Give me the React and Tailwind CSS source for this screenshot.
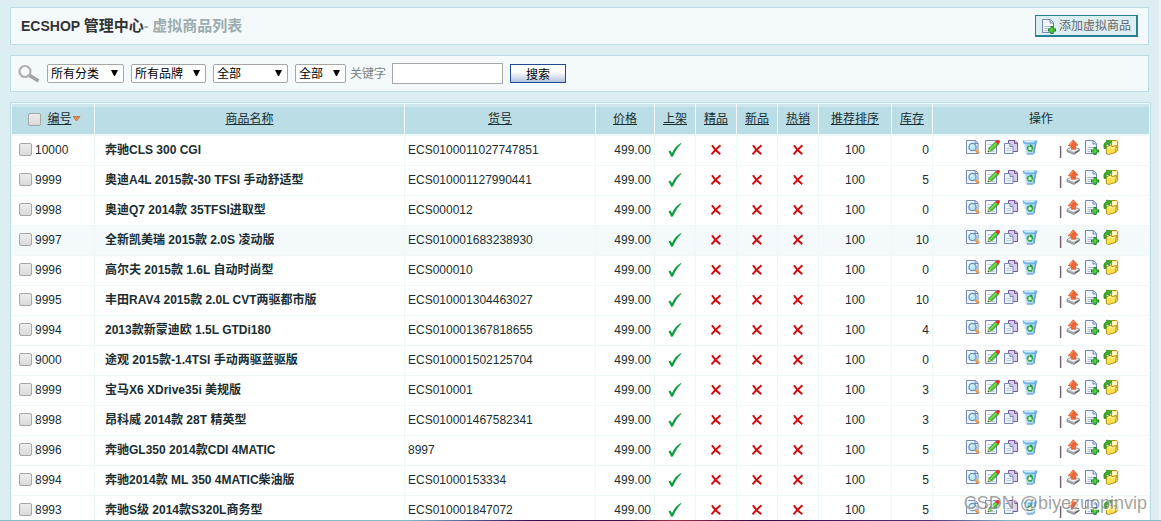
import React from "react";

const ROWS = [
  ["10000", "奔驰CLS 300 CGI", "ECS0100011027747851", "0"],
  ["9999", "奥迪A4L 2015款-30 TFSI 手动舒适型", "ECS010001127990441", "5"],
  ["9998", "奥迪Q7 2014款 35TFSI进取型", "ECS000012", "0"],
  ["9997", "全新凯美瑞 2015款 2.0S 凌动版", "ECS010001683238930", "10"],
  ["9996", "高尔夫 2015款 1.6L 自动时尚型", "ECS000010", "0"],
  ["9995", "丰田RAV4 2015款 2.0L CVT两驱都市版", "ECS010001304463027", "10"],
  ["9994", "2013款新蒙迪欧 1.5L GTDi180", "ECS010001367818655", "4"],
  ["9000", "途观 2015款-1.4TSI 手动两驱蓝驱版", "ECS010001502125704", "0"],
  ["8999", "宝马X6 XDrive35i 美规版", "ECS010001", "3"],
  ["8998", "昂科威 2014款 28T 精英型", "ECS010001467582341", "3"],
  ["8996", "奔驰GL350 2014款CDI 4MATIC", "8997", "5"],
  ["8994", "奔驰2014款 ML 350 4MATIC柴油版", "ECS01000153334", "5"],
  ["8993", "奔驰S级 2014款S320L商务型", "ECS010001847072", "5"],
];

const Svg = ({ children }) => (
  <svg width="16" height="16" viewBox="0 0 16 16" className="block shrink-0" aria-hidden="true">
    {children}
  </svg>
);

const ViewIcon = () => (
  <Svg>
    <path d="M1.500 1.500h9l2.500 2.500v10.500h-11.500z" fill="#f3f7fd" stroke="#7486b4" />
    <path d="M10 1.500v3h3" fill="#cfdcf0" stroke="#7486b4" />
    <circle cx="7.500" cy="8" r="3.600" fill="#bfe6f5" stroke="#5f93bb" strokeWidth="1.300" />
    <path d="M5.700 8a1.900 1.900 0 0 1 1.900-1.900" stroke="#fff" fill="none" />
    <path d="M10.500 10.800l3.500 3.500" stroke="#e98b3c" strokeWidth="2.600" />
    <path d="M10.600 10.200l3 3" stroke="#f9c98e" strokeWidth="0.800" />
  </Svg>
);

const EditIcon = () => (
  <Svg>
    <path d="M1.500 1.500h11v13h-11z" fill="#f3f7fd" stroke="#7486b4" />
    <path d="M3.500 5.500h5M3.500 8.500h4M8 12.500h3" stroke="#b9c9e6" />
    <path d="M4 12.900l1-3.600 7-7 2.700 2.700-7 7z" fill="#4cc22f" stroke="#2b8a1e" strokeWidth="0.700" />
    <path d="M6.300 10.200l6.600-6.600" stroke="#a8ee80" />
    <path d="M11.300 3l1.800-2h2.200l.5.500v2.200l-1.800 1.900z" fill="#e2382c" />
    <path d="M3.900 13l.9-3 2 2z" fill="#f2d29a" />
    <path d="M3.700 13.200l.4-1.500 1.100 1.100z" fill="#333" />
  </Svg>
);

const CopyIcon = () => (
  <Svg>
    <path d="M5.500 1.500h6.500l2.500 2.500v8.500h-9z" fill="#d9cdea" stroke="#74589a" />
    <path d="M11.500 1.500v3h3" fill="#b9a6d3" stroke="#74589a" />
    <path d="M1.500 4.500h5.500l3 3v7h-8.500z" fill="#eef3fc" stroke="#7486b4" />
    <path d="M7 4.500v3h3" fill="#cfdcf0" stroke="#7486b4" />
    <path d="M3.500 9.500h4.500M3.500 11.500h4.500" stroke="#b9c9e6" />
  </Svg>
);

const TrashIcon = () => (
  <Svg>
    <path d="M1.700 3.500l2 10.800 1.300 1.200h6l1.300-1.200 2-10.800z" fill="#b4daf5" />
    <path d="M2.300 4l1.900 10.300" stroke="#deF0fb" strokeWidth="1.300" />
    <path d="M13.700 4l-1.900 10.500" stroke="#5d9ddb" strokeWidth="1.500" />
    <path d="M.5 1.500h15l-.8 3c-4 1.400-9.400 1.400-13.400 0z" fill="#6db1ea" />
    <path d="M1.500 1.500h12l-2 2h-8.500z" fill="#d4ebfa" />
    <path d="M5 15h6" stroke="#5d8fc4" />
    <circle cx="8" cy="9.500" r="2.500" fill="#e6f8e2" stroke="#2aa53c" strokeWidth="1.700" />
    <path d="M8 6v1.800M5 11.400l1.400-.8M11 11.400l-1.400-.8" stroke="#c9ecd0" strokeWidth="0.800" />
    <path d="M8 5.600l2.600 1-1.900 1.800z" fill="#148a2c" />
  </Svg>
);

const UploadIcon = () => (
  <Svg>
    <path d="M2 10.500l5-3 7.500 2.500v1.800l-5.500 3.700-7-3z" fill="#a9adb2" stroke="#6f7276" strokeWidth="0.700" />
    <path d="M2.500 10.500l4.800-2.500 6.500 2.200-4.900 2.900z" fill="#eceef0" />
    <path d="M10 14l3.600-2.400" stroke="#4f5257" />
    <path d="M8.200 .8l4.800 5.400-2.300.1v4h-4.300l-.2-3.300-3-.2z" fill="#f26432" stroke="#d8501f" strokeWidth="0.600" />
    <path d="M8.100 2.300l-3 3.700" stroke="#ffb48a" fill="none" strokeWidth="0.800" />
  </Svg>
);

const AddIcon = () => (
  <Svg>
    <path d="M1.500 1.500h8l3 3v10h-11z" fill="#f3f7fd" stroke="#7486b4" />
    <path d="M9 1.500v3.500h3.500" fill="#cfdcf0" stroke="#7486b4" />
    <path d="M3.500 8.500h6M3.500 10.500h4M3.500 12.500h3" stroke="#a9bbdd" />
    <path d="M9.500 8h3v2.500h2.500v3h-2.500v2.500h-3v-2.500h-2.500v-3h2.500z" fill="#128a1b" />
    <path d="M11 9.200v5.600M8.200 12h5.600" stroke="#6fe64c" strokeWidth="1.200" />
  </Svg>
);

const FolderIcon = () => (
  <Svg>
    <path d="M8.500 1.500h5l1.200 1v9l-1.500 1.500h-4.700z" fill="#fff0a3" stroke="#b38f12" />
    <path d="M10 3h3v7.500h-3z" fill="#fffbe0" />
    <path d="M3 8l4.500-2 1.500 1.500 4.500-1-1 7-7 2-2-1z" fill="#ffe14f" stroke="#b38f12" />
    <path d="M5 9l2.500-1.300 1.500 1.500 3-.7" stroke="#fff6b8" fill="none" />
    <path d="M1.200 9.500c-1-4 .3-6.200 2.600-6.700l-.5-1.600 5.200.6-2.300 4.600-1-1.500c-2 .5-2.500 2-1.900 4.300z" fill="#3fae2a" stroke="#1f7d16" strokeWidth="0.700" />
  </Svg>
);

const Tick = () => (
  <svg width="14" height="14" viewBox="0 0 14 14" className="mx-auto block" role="img" aria-label="是">
    <path d="M.5 8.500l1.800-1.100 1.700 2.800c2-4.400 4.600-7.600 9-10.100l.5.400c-3.600 3.500-6.300 7.700-8.600 13l-1.800.2c-.7-2-1.500-3.600-2.600-5.200z" fill="#089c3c" />
  </svg>
);

const Cross = () => (
  <svg width="12" height="12" viewBox="0 0 12 12" className="mx-auto block" role="img" aria-label="否">
    <path d="M2 1.300c1.500 2.800 4.500 6.300 8.300 8.800M10.500 1.300c-3 2.500-6 5.500-9 9" stroke="#d20a10" strokeWidth="1.900" fill="none" />
  </svg>
);

const checkboxClass =
  "size-[13px] shrink-0 appearance-none rounded-[2px] border border-[#a6a6a6] bg-linear-to-b from-[#ededed] to-[#dadada] checked:bg-none checked:bg-[#278296]";

function Select({ label, className, options }) {
  return (
    <div className={`grid h-[19px] items-center ${className}`}>
      <select
        aria-label={label}
        className="col-start-1 row-start-1 h-[19px] w-full appearance-none rounded-[2px] border border-[#a6a6a6] bg-white pl-[3px] text-black"
      >
        {options.map((o) => (
          <option key={o}>{o}</option>
        ))}
      </select>
      <svg
        width="7"
        height="8"
        viewBox="0 0 7 8"
        aria-hidden="true"
        className="pointer-events-none col-start-1 row-start-1 mr-[6px] justify-self-end"
      >
        <path d="M0 0h7L4 6H3z" />
      </svg>
    </div>
  );
}

const HEADINGS = ["商品名称", "货号", "价格", "上架", "精品", "新品", "热销", "推荐排序", "库存"];

const thClass =
  "h-[31px] border-b border-[#eef8f9] bg-[#bbdde5] bg-[linear-gradient(#cbe5eb_0_3px,#bbdde5_3px)] p-0 text-center font-normal";

const ACTIONS = [
  ["查看", ViewIcon],
  ["编辑", EditIcon],
  ["复制", CopyIcon],
  ["回收站", TrashIcon],
];
const CARD_ACTIONS = [
  ["批量添加", UploadIcon],
  ["补货", AddIcon],
  ["查看虚拟卡", FolderIcon],
];

const IconLink = ({ label, Icon }) => (
  <a href="#" aria-label={label} title={label}>
    <Icon />
  </a>
);

export default function App() {
  return (
    <div className="relative flex h-screen flex-col overflow-hidden bg-[#ddeef2] font-['Liberation_Sans','Noto_Sans_CJK_SC',sans-serif] text-[12px] leading-4 text-[#192e32]">
      <div className="flex min-h-0 flex-1 flex-col gap-[10px] overflow-hidden border-r-2 border-[#f0f2f4] pt-[7px] pr-2 pl-[10px]">
        <header className="mr-[2px] flex h-[38px] shrink-0 items-center justify-between border border-[#bbdde5] bg-[#f4fafb] pr-[10px] pl-[10px]">
          <h1 className="text-[15px] leading-5 font-bold text-[#9cacaf]">
            <a href="#" className="text-[#333333]">
              <span className="text-[14px]">ECSHOP </span>管理中心
            </a>
            <span className="text-[14px]">- </span>虚拟商品列表
          </h1>
          <a
            href="#"
            className="flex h-[22px] items-center gap-[2px] border-t border-r-2 border-b-2 border-l border-[#278296] bg-[#ddeef2] px-[5px] text-[#666666]"
          >
            <AddIcon />
            添加虚拟商品
          </a>
        </header>

        <form
          onSubmit={(e) => e.preventDefault()}
          className="mr-[2px] flex h-[37px] shrink-0 items-center gap-[7px] border border-[#bbdde5] bg-[#f4fafb] px-[7px]"
        >
          <svg width="22" height="20" viewBox="0 0 22 20" className="shrink-0" aria-hidden="true">
            <path d="M11 11l9.500 6" stroke="#a3a3a3" strokeWidth="3.600" />
            <circle cx="7" cy="7.500" r="5.500" fill="#f8fbfc" stroke="#b0b0b0" strokeWidth="2.200" />
          </svg>
          <Select label="分类" className="w-[77px]" options={["所有分类"]} />
          <Select label="品牌" className="w-[75px]" options={["所有品牌"]} />
          <Select label="推荐" className="w-[75px]" options={["全部", "精品", "新品", "热销"]} />
          <div className="flex items-center gap-1">
            <Select label="上架状态" className="w-[51px]" options={["全部", "上架", "下架"]} />
            <label htmlFor="keyword" className="text-[#808080]">
              关键字
            </label>
            <input id="keyword" type="text" className="ml-[2px] h-[21px] w-[111px] border border-[#a6a6a6] bg-white px-1" />
          </div>
          <button
            type="submit"
            className="h-[19px] w-14 border border-[#1f4a8c] bg-linear-to-b from-white from-40% to-[#b4c3dc] pt-[2px] text-[12px] leading-4 text-black"
          >
            搜索
          </button>
        </form>

        <div className="shrink-0 border border-[#bbdde5]">
          <table className="w-full table-fixed border-separate border-spacing-px bg-[#eef8f9]">
            <colgroup>
              <col className="w-[82px]" />
              <col />
              <col className="w-[190px]" />
              <col className="w-[58px]" />
              <col className="w-10" />
              <col className="w-10" />
              <col className="w-10" />
              <col className="w-10" />
              <col className="w-[72px]" />
              <col className="w-10" />
              <col className="w-[216px]" />
            </colgroup>
            <thead>
              <tr>
                <th className={thClass}>
                  <div className="flex items-center justify-center pl-[3px]">
                    <input type="checkbox" aria-label="全选" className={checkboxClass} />
                    <a href="#" className="ml-[6px] underline">
                      编号
                    </a>
                    <svg width="9" height="8" viewBox="0 0 9 8" aria-hidden="true">
                      <path d="M1 1.500h7L4.500 6z" fill="#f08a3c" stroke="#a8705c" strokeWidth="0.800" />
                    </svg>
                  </div>
                </th>
                {HEADINGS.map((h) => (
                  <th key={h} className={thClass}>
                    <a href="#" className="underline">
                      {h}
                    </a>
                  </th>
                ))}
                <th className={thClass}>操作</th>
              </tr>
            </thead>
            <tbody>
              {ROWS.map(([id, name, sn, stock], i) => (
                <tr key={id} className={i === 3 ? "h-[29px] bg-[#f4fafb]" : "h-[29px] bg-white"}>
                  <td className="p-0 pb-[2px] pl-[7px]">
                    <label className="flex items-center gap-[3px]">
                      <input type="checkbox" className={checkboxClass} />
                      {id}
                    </label>
                  </td>
                  <td className="p-0 pb-[2px] pl-[10px] font-bold whitespace-nowrap">{name}</td>
                  <td className="p-0 pb-[2px] pl-[3px]">{sn}</td>
                  <td className="p-0 pr-[3px] pb-[2px] text-right">499.00</td>
                  <td className="p-0 pb-[2px]">
                    <Tick />
                  </td>
                  <td className="p-0 pb-[2px]">
                    <Cross />
                  </td>
                  <td className="p-0 pb-[2px]">
                    <Cross />
                  </td>
                  <td className="p-0 pb-[2px]">
                    <Cross />
                  </td>
                  <td className="p-0 pb-[2px] text-center">100</td>
                  <td className="p-0 pr-[3px] pb-[2px] text-right">{stock}</td>
                  <td className="p-0">
                    <div className="flex h-[29px] items-start justify-center gap-[3px] pt-[3px] pl-[2px]">
                      {ACTIONS.map(([label, Icon]) => (
                        <IconLink key={label} label={label} Icon={Icon} />
                      ))}
                      <span className="ml-[18px] pt-1">|</span>
                      {CARD_ACTIONS.map(([label, Icon]) => (
                        <IconLink key={label} label={label} Icon={Icon} />
                      ))}
                    </div>
                  </td>
                </tr>
              ))}
            </tbody>
          </table>
        </div>
      </div>
      <div className="h-px shrink-0 bg-[linear-gradient(90deg,#80bdcb_0%,#80bdcb_35%,#4a5590_41%,#3a0c50_46%,#40104a_54%,#a03048_58%,#380a48_65%,#50307a_80%,#80bdcb_87%,#80bdcb_100%)]" />
      <div className="pointer-events-none absolute right-[14px] bottom-[8px] text-[18px] leading-5 text-[#777777]/70 [text-shadow:1px_1px_1px_#ffffff]">
        CSDN @biyezuopinvip
      </div>
    </div>
  );
}
